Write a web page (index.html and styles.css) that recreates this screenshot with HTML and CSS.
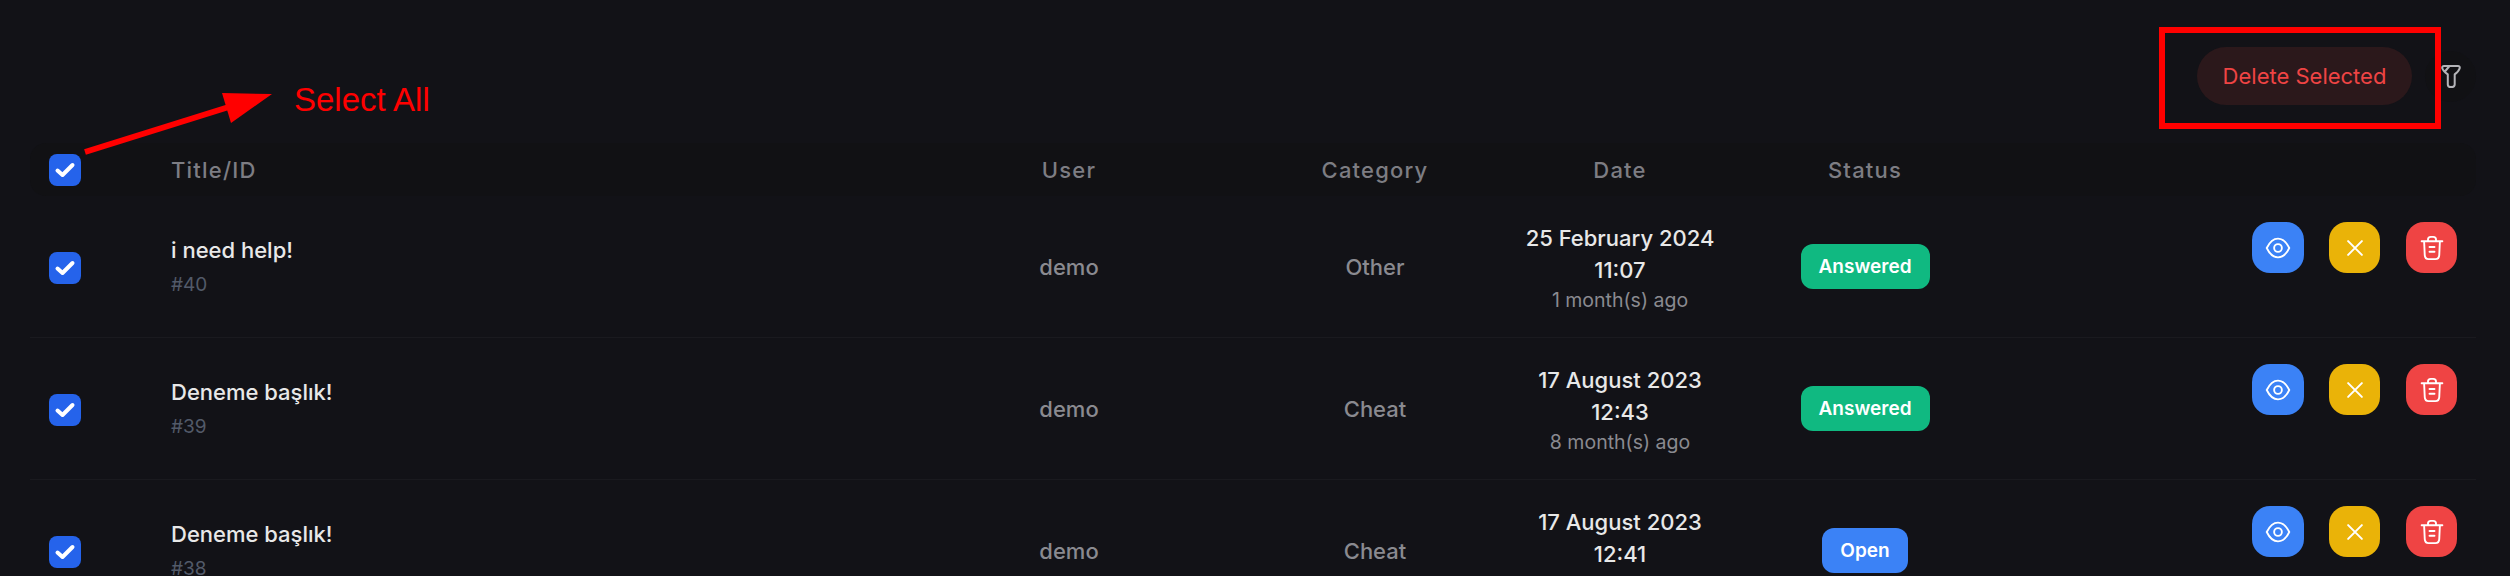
FILE: index.html
```html
<!DOCTYPE html>
<html lang="en">
<head>
  <meta charset="UTF-8" />
  <title>Tickets</title>
  <link rel="stylesheet" href="styles.css">
</head>
<body>

  <svg class="icon-defs" aria-hidden="true">
    <symbol id="i-check" viewBox="0 0 32 32">
      <path d="M8.5 16.5l5 4.5 10-10" fill="none" stroke="#fff" stroke-width="4" stroke-linecap="round" stroke-linejoin="round" />
    </symbol>
    <symbol id="i-eye" viewBox="0 0 24 24">
      <path d="M3 12C5.4 7 8.4 4.500 12 4.500S18.600 7 21 12c-2.400 5-5.400 7.500-9 7.500S5.400 17 3 12z" fill="none" stroke="#fff" stroke-width="1.500" />
      <circle cx="12" cy="12" r="3.100" fill="none" stroke="#fff" stroke-width="1.500" />
    </symbol>
    <symbol id="i-x" viewBox="0 0 24 24">
      <path d="M6.500 6.500l11 11M17.500 6.500l-11 11" fill="none" stroke="#fff" stroke-width="1.600" stroke-linecap="round" />
    </symbol>
    <symbol id="i-trash" viewBox="0 0 24 24">
      <path d="M3.700 6.600h16.600M8.800 6.300V5.200c0-1.400.9-2.100 2.200-2.100h2c1.300 0 2.200.7 2.200 2.100v1.100M5.700 6.800l.5 10.900c.1 2 1.100 3.200 3.100 3.200h5.400c2 0 3-1.200 3.100-3.200l.5-10.900M10 11.200h4M10 15h4" fill="none" stroke="#fff" stroke-width="1.500" stroke-linecap="round" />
    </symbol>
  </svg>

  <div class="page">
    <div class="toolbar">
      <button class="delete-selected">Delete Selected</button>
      <button class="filter-btn">
        <svg viewBox="0 0 20 23" width="20" height="23">
          <path d="M3 1h14c1.300 0 2 1 1.700 2.200-.4 1.500-2 3.800-5 6.200v10c0 2-1.200 2.600-3.700 2.600s-3.200-.8-3.200-2.600V9.400C3.500 7 1.700 4.700 1.300 3.200 1 2 1.700 1 3 1zM8.500 1L3.500 7" fill="none" stroke="#b4b4b8" stroke-width="2" stroke-linejoin="round" />
        </svg>
      </button>
    </div>

    <div class="ticket-table">
      <div class="ticket-head">
        <div class="cell-check"><span class="checkbox"><svg><use href="#i-check" /></svg></span></div>
        <div>Title/ID</div>
        <div class="center">User</div>
        <div class="center">Category</div>
        <div class="center">Date</div>
        <div class="center">Status</div>
        <div></div>
      </div>

      <div class="ticket-row">
        <div class="cell-check"><span class="checkbox"><svg><use href="#i-check" /></svg></span></div>
        <div>
          <div class="ticket-title">i need help!</div>
          <div class="ticket-id">#40</div>
        </div>
        <div class="center muted">demo</div>
        <div class="center muted">Other</div>
        <div class="center date">
          <div>25 February 2024</div>
          <div>11:07</div>
          <small>1 month(s) ago</small>
        </div>
        <div class="center"><span class="badge badge-green">Answered</span></div>
        <div class="actions">
          <a class="act act-blue"><svg><use href="#i-eye" /></svg></a>
          <a class="act act-yellow"><svg><use href="#i-x" /></svg></a>
          <a class="act act-red"><svg><use href="#i-trash" /></svg></a>
        </div>
      </div>

      <div class="ticket-row">
        <div class="cell-check"><span class="checkbox"><svg><use href="#i-check" /></svg></span></div>
        <div>
          <div class="ticket-title">Deneme başlık!</div>
          <div class="ticket-id">#39</div>
        </div>
        <div class="center muted">demo</div>
        <div class="center muted">Cheat</div>
        <div class="center date">
          <div>17 August 2023</div>
          <div>12:43</div>
          <small>8 month(s) ago</small>
        </div>
        <div class="center"><span class="badge badge-green">Answered</span></div>
        <div class="actions">
          <a class="act act-blue"><svg><use href="#i-eye" /></svg></a>
          <a class="act act-yellow"><svg><use href="#i-x" /></svg></a>
          <a class="act act-red"><svg><use href="#i-trash" /></svg></a>
        </div>
      </div>

      <div class="ticket-row">
        <div class="cell-check"><span class="checkbox"><svg><use href="#i-check" /></svg></span></div>
        <div>
          <div class="ticket-title">Deneme başlık!</div>
          <div class="ticket-id">#38</div>
        </div>
        <div class="center muted">demo</div>
        <div class="center muted">Cheat</div>
        <div class="center date">
          <div>17 August 2023</div>
          <div>12:41</div>
          <small>8 month(s) ago</small>
        </div>
        <div class="center"><span class="badge badge-blue">Open</span></div>
        <div class="actions">
          <a class="act act-blue"><svg><use href="#i-eye" /></svg></a>
          <a class="act act-yellow"><svg><use href="#i-x" /></svg></a>
          <a class="act act-red"><svg><use href="#i-trash" /></svg></a>
        </div>
      </div>
    </div>
  </div>

  <!-- red annotations drawn on top of the screenshot -->
  <svg class="note-arrow" width="300" height="170" viewBox="0 0 300 170">
    <path d="M85 152L232 106" stroke="#ff0000" stroke-width="6" fill="none" />
    <path d="M272 94L222 93L231 123z" fill="#ff0000" />
  </svg>
  <span class="note-text">Select All</span>
  <div class="note-box"></div>

</body>
</html>
```

FILE: styles.css
```css
html {
  overflow: hidden;
}

body {
  margin: 0;
  height: 576px;
  overflow: hidden;
  background-color: #121217;
  font-family: Inter, 'Noto Sans', sans-serif;
  color: #e8e8e8;
}

.icon-defs {
  display: none;
}

.page {
  height: 576px;
  overflow: hidden;
  padding: 0 34px 0 30px;
}

/* top bar */
.toolbar {
  display: flex;
  justify-content: flex-end;
  align-items: center;
  gap: 13px;
  height: 143px;
  padding-top: 9px;
  box-sizing: border-box;
}

.delete-selected {
  height: 58px;
  width: 215px;
  border: 0;
  border-radius: 29px;
  background: #2b181b;
  color: #ef4444;
  font-family: inherit;
  font-size: 22px;
}

.filter-btn {
  display: flex;
  align-items: center;
  justify-content: center;
  width: 51px;
  height: 51px;
  padding: 0;
  border: 0;
  border-radius: 50%;
  background: #111114;
}

/* table */
.ticket-head,
.ticket-row {
  display: grid;
  grid-template-columns: 141px 729px 338px 274px 216px 274px 1fr;
  align-items: center;
}

.ticket-head {
  height: 53px;
  background: #111114;
  border-radius: 16px;
  color: #7d7d83;
  font-size: 22px;
  font-weight: 500;
  letter-spacing: 1.2px;
}

.ticket-row {
  height: 142px;
  box-sizing: border-box;
  border-bottom: 1px solid #1a1a1f;
}

.center {
  text-align: center;
}

.cell-check {
  padding-left: 19px;
}

.ticket-row .cell-check {
  padding-top: 3px;
}

.checkbox {
  display: block;
  width: 32px;
  height: 32px;
  border-radius: 8px;
  background: #2563eb;
}

.checkbox svg {
  display: block;
  width: 32px;
  height: 32px;
}

.ticket-title {
  font-size: 22px;
  font-weight: 500;
  line-height: 30px;
}

.ticket-id {
  margin-top: 6px;
  color: #525a69;
  font-size: 19px;
  line-height: 28px;
}

.muted {
  color: #8a8a90;
  font-size: 22px;
  font-weight: 500;
}

.date {
  padding-top: 3px;
  font-size: 22px;
  font-weight: 500;
  line-height: 32px;
}

.date small {
  display: block;
  color: #8a8a90;
  font-size: 19.5px;
  font-weight: 400;
  line-height: 28px;
}

.badge {
  display: inline-block;
  height: 45px;
  padding: 0 18px;
  border-radius: 12px;
  color: #fff;
  font-size: 19px;
  font-weight: 600;
  line-height: 45px;
}

.badge-green {
  background: #10b981;
}

.badge-blue {
  background: #3b82f6;
}

.actions {
  display: flex;
  justify-content: flex-end;
  gap: 26px;
  align-self: start;
  margin-top: 26px;
  padding-right: 19px;
}

.act {
  display: flex;
  align-items: center;
  justify-content: center;
  width: 51px;
  height: 51px;
  border-radius: 18px;
}

.act svg {
  width: 30px;
  height: 30px;
}

.act-blue {
  width: 52px;
  margin-right: -1px;
  background: #3b82f6;
}

.act-yellow {
  background: #eab308;
}

.act-red {
  background: #ef4444;
}

/* annotations */
.note-arrow {
  position: absolute;
  top: 0;
  left: 0;
}

.note-text {
  position: absolute;
  top: 83px;
  left: 294px;
  color: #ff0000;
  font-family: 'Liberation Sans', sans-serif;
  font-size: 33px;
  line-height: 34px;
}

.note-box {
  position: absolute;
  top: 27px;
  left: 2159px;
  width: 270px;
  height: 90px;
  border: 6px solid #ff0000;
}
```
